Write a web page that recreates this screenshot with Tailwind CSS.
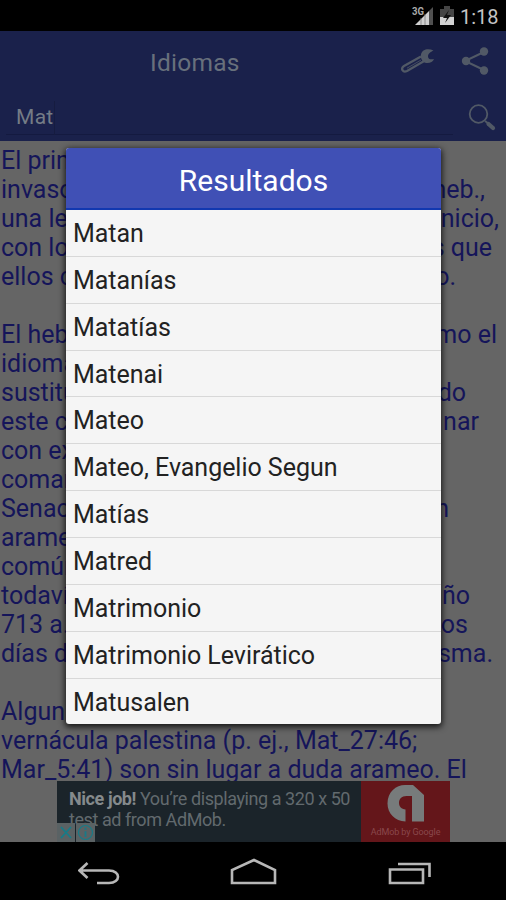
<!DOCTYPE html>
<html lang="es">
<head>
<meta charset="utf-8">
<title>Idiomas</title>
<script src="https://cdn.jsdelivr.net/npm/@tailwindcss/browser@4"></script>
</head>
<body class="bg-black">
<div class="relative flex h-[900px] w-[506px] flex-col overflow-hidden bg-black font-[Roboto,sans-serif]">
  <div class="flex h-[31px] shrink-0 items-center justify-end pr-[7px]">
    <svg class="h-[31px] w-[50px]" viewBox="0 0 50 31" fill="none">
      <text x="4" y="14.5" font-size="10" font-weight="700" fill="#aaa" textLength="12" lengthAdjust="spacingAndGlyphs">3G</text>
      <path d="M7 25 21 11v14z" fill="#cfcfcf"/><path d="M21 11 25 7v18h-4z" fill="#505050"/>
      <path d="M13 18v7M17 14v11" stroke="#777" stroke-width=".8"/>
      <path d="M32 9h4V6h6v3h4v16H32z" fill="#454545"/><path d="M32 17h14v8H32z" fill="#d2d2d2"/>
      <path d="m41 10-6 8h4l-2 5 6-8h-4z" fill="#111"/>
    </svg>
    <span class="ml-[2px] mt-[2px] w-[39px] whitespace-nowrap text-[20px] text-[#c4c4c4]">1:18</span>
  </div>

  <header class="flex h-[110px] shrink-0 flex-col bg-[#1a214b]">
    <div class="flex h-[62px] items-center">
      <h1 class="ml-[150px] mt-[3px] w-[240px] text-[24.5px] tracking-[0.25px] text-[#68707c]">Idiomas</h1>
      <svg class="ml-[11px] mt-[-2px] h-[30px] w-[36px]" viewBox="0 0 36 30" fill="none" stroke="#515966">
        <path d="M20 10.500 3 20c-4 2.500-1 7 3 5L24 14.500" stroke-width="2.300"/>
        <path d="M6 22.200 20 14" stroke-width=".8"/>
        <path d="M32.500 4.500c-5-2.500-11.500-1.500-12.500 4-.8 4 1.500 8 5.500 8.500 3.500 .3 6.500-1 7.500-4-3 .8-6 .3-6-2.500 0-3 2.500-4.500 5.500-6z" fill="#515966" stroke="none"/>
      </svg>
      <svg class="ml-[23px] mt-[-2px] h-[30px] w-[30px]" viewBox="0 0 30 30" fill="#515966">
        <path d="M25 5.500 5 15l20 9.500" fill="none" stroke="#515966" stroke-width="2"/><circle cx="24" cy="5.500" r="4.200"/><circle cx="6" cy="15" r="4.200"/><circle cx="24" cy="24.500" r="4.200"/>
      </svg>
    </div>
    <div class="flex h-[48px]">
      <div class="ml-[6px] flex h-[42px] w-[447px] items-center border-b border-[#141a40] pl-[10px] text-[21px] tracking-[0.3px] text-[#747c86]"><span class="mt-[8px] h-[34px] border-r border-[#161c40] leading-[33px]">Mat</span></div>
      <svg class="ml-[15px] mt-[10px] h-[30px] w-[30px]" viewBox="0 0 30 30" fill="none" stroke="#515966"><circle cx="10.500" cy="11" r="8.800" stroke-width="1.800"/><path d="m17 18 4 3" stroke-width="2"/><path d="m20.500 21 4.500 4" stroke-width="4.200" stroke-linecap="round"/></svg>
    </div>
  </header>

  <main class="h-[640px] shrink-0 overflow-hidden bg-[#656565] pl-px pt-[4.500px] text-[25px] leading-[29.05px] whitespace-nowrap text-[#15155a]">
    <div class="h-[29.05px]">El primer</div>
    <div class="flex h-[29.05px] justify-between pr-[21px]"><span>invasores</span><span>heb.,</span></div>
    <div class="flex h-[29.05px] justify-between pr-[7px]"><span>una le</span><span>inicio,</span></div>
    <div class="flex h-[29.05px] justify-between pr-[14px]"><span>con lo</span><span>s que</span></div>
    <div class="flex h-[29.05px] justify-between pr-[50px]"><span>ellos c</span><span>o.</span></div>
    <div class="h-[29.05px]"></div>
    <div class="flex h-[29.05px] justify-between pr-[9px]"><span>El heb</span><span>mo el</span></div>
    <div class="h-[29.05px]">idioma</div>
    <div class="flex h-[29.05px] justify-between pr-[40px]"><span>sustitu</span><span>do</span></div>
    <div class="flex h-[29.05px] justify-between pr-[27px]"><span>este c</span><span>nar</span></div>
    <div class="h-[29.05px]">con ex</div>
    <div class="h-[29.05px]">coman</div>
    <div class="flex h-[29.05px] justify-between pr-[57px]"><span>Senac</span><span>n</span></div>
    <div class="h-[29.05px]">arame</div>
    <div class="h-[29.05px]">común</div>
    <div class="flex h-[29.05px] justify-between pr-[36px]"><span>todaví</span><span>ño</span></div>
    <div class="flex h-[29.05px] justify-between pr-[38px]"><span>713 a.</span><span>os</span></div>
    <div class="flex h-[29.05px] justify-between pr-[13px]"><span>días d</span><span>sma.</span></div>
    <div class="h-[29.05px]"></div>
    <div class="h-[29.05px]">Algun</div>
    <div class="h-[29.05px]">vernácula palestina (p. ej., Mat_27:46;</div>
    <div class="h-[29.05px]">Mar_5:41) son sin lugar a duda arameo. El</div>
  </main>

  <aside class="flex h-[61px] shrink-0 bg-[#656565] pl-[57px]">
    <div class="relative w-[304px] bg-[#1b242a] pl-[12px] pt-[8px] text-[18px] tracking-[-0.43px] leading-[20.500px] whitespace-nowrap text-[#626a6e]">
      <div><b class="text-[#858a8c]">Nice job!</b> You’re displaying a 320 x 50</div>
      <div>test ad from AdMob.</div>
      <div class="absolute bottom-0 left-0 flex gap-px">
        <svg class="h-[19px] w-[18px] bg-[#5a6264]" viewBox="0 0 18 19" fill="none" stroke="#177b88" stroke-width="1.800"><path d="m4 4 10 11M14 4 4 15"/></svg>
        <svg class="h-[19px] w-[19px] bg-[#5a6264]" viewBox="0 0 19 19" fill="none" stroke="#177b88" stroke-width="1.200"><circle cx="9.500" cy="9.500" r="7"/><path d="M9.500 8.200v5.800M9.500 4.800v2" stroke-width="1.800"/></svg>
      </div>
    </div>
    <div class="flex w-[89px] flex-col items-center bg-[#64161a]">
      <svg class="mt-[3px] h-[38px] w-[38px]" viewBox="0 0 38 38"><path d="M18.500 37.500C8 37 .5 29.500 .5 19.500 .5 8 9 1 18 1h8l11 10v26.500H25V12h-5.500c-5 0-7.500 3-7.500 6.800 0 4 2.500 6.200 6.500 6.700z" fill="#777b7b"/></svg>
      <div class="mt-[4px] whitespace-nowrap text-[9px] tracking-[-0.1px] leading-[12px] text-[#8a484c]">AdMob by Google</div>
    </div>
  </aside>

  <nav class="flex h-[58px] shrink-0 items-center pl-[78px]">
    <svg class="h-[30px] w-[42px]" viewBox="0 0 42 30" fill="none" stroke="#b7b7b7" stroke-width="2.600"><path d="m9.500 7-8 7.500 8 7.500M2 14.500h29c12 0 12 12.500 0 12.500H19"/></svg>
    <svg class="ml-[110px] h-[30px] w-[48px]" viewBox="0 0 48 30" fill="none" stroke="#b7b7b7" stroke-width="2.600"><path d="M2 27V14L24 4l21 10v13z"/></svg>
    <svg class="ml-[110px] h-[30px] w-[44px]" viewBox="0 0 44 30" fill="none" stroke="#b7b7b7" stroke-width="2.600"><path d="M2 13.500h33V27H2zM10 8h31.500v13"/></svg>
  </nav>

  <section class="absolute left-[66px] top-[148px] flex h-[576px] w-[375px] flex-col overflow-hidden rounded-[3px] bg-[#f5f5f5] shadow-[0_2px_6px_1px_rgba(0,0,0,0.8)]">
    <h2 class="h-[62px] shrink-0 border-b-2 border-[#1238b0] bg-[#4050b5] text-center text-[30px] leading-[66px] text-white">Resultados</h2>
    <ul class="text-[25px] tracking-[-0.03px] whitespace-nowrap text-[#222] [&>li]:h-[46.87px] [&>li]:border-b [&>li]:border-[#d8d8d8] [&>li]:pl-[7px] [&>li]:leading-[48px]">
      <li>Matan</li><li>Matanías</li><li>Matatías</li><li>Matenai</li><li>Mateo</li><li>Mateo, Evangelio Segun</li><li>Matías</li><li>Matred</li><li>Matrimonio</li><li>Matrimonio Levirático</li><li>Matusalen</li>
    </ul>
  </section>
</div>
</body>
</html>
